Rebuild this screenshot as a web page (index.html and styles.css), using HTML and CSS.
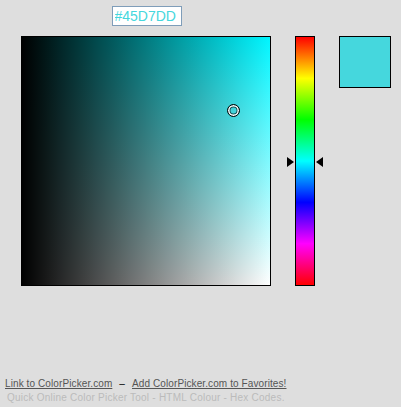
FILE: index.html
```html
<!DOCTYPE html>
<html>
<head>
<meta charset="utf-8">
<link rel="stylesheet" href="styles.css">
</head>
<body>
<div class="app">
  <div class="picker">
    <div class="main-col">
      <input class="hex" type="text" value="#45D7DD">
      <div class="sv">
        <div class="cursor"></div>
      </div>
    </div>
    <div class="hue-col">
      <div class="hue"></div>
      <span class="arrow arrow-left"></span>
      <span class="arrow arrow-right"></span>
    </div>
    <div class="swatch"></div>
  </div>
  <div class="footer">
    <div class="links"><a href="#">Link to ColorPicker.com</a><span class="dash">–</span><a href="#">Add ColorPicker.com to Favorites!</a></div>
    <div class="tagline">Quick Online Color Picker Tool - HTML Colour - Hex Codes.</div>
  </div>
</div>
</body>
</html>
```
FILE: styles.css
```css
html, body {
  margin: 0;
  padding: 0;
  background: #dedede;
}
body {
  width: 401px;
  height: 407px;
  overflow: hidden;
  font-family: "Liberation Sans", Arial, sans-serif;
}
.app {
  padding-top: 6px;
}
.picker {
  display: flex;
  align-items: flex-start;
  padding-left: 21px;
}
.main-col {
  display: flex;
  flex-direction: column;
  align-items: center;
  gap: 10px;
  width: 250px;
}
.hex {
  box-sizing: border-box;
  width: 70px;
  height: 20px;
  margin: 0 0 0 1px;
  padding: 0 0 0 2px;
  border: 1px solid #7f9db9;
  background: #fff;
  color: #45d7dd;
  font-family: "Liberation Sans", Arial, sans-serif;
  font-size: 14px;
  outline: none;
}
.sv {
  position: relative;
  box-sizing: border-box;
  width: 250px;
  height: 250px;
  border: 1px solid #000;
  background:
    linear-gradient(to right, #000, rgba(0,0,0,0)),
    linear-gradient(to bottom, #00f5ff, #fff);
}
.cursor {
  position: absolute;
  left: 205px;
  top: 67px;
  box-sizing: border-box;
  width: 13px;
  height: 13px;
  border: 1.5px solid #000;
  border-radius: 50%;
  box-shadow: inset 0 0 0 1.5px #fff, inset 0 0 0 2.5px rgba(0,0,0,0.6);
}
.hue-col {
  position: relative;
  margin-top: 30px;
  margin-left: 24px;
}
.hue {
  box-sizing: border-box;
  width: 20px;
  height: 250px;
  border: 1px solid #000;
  background: linear-gradient(to bottom, #f00 0%, #ff0 16.67%, #0f0 33.33%, #0ff 50%, #00f 66.67%, #f0f 83.33%, #f00 100%);
}
.arrow {
  position: absolute;
  top: 121px;
  width: 0;
  height: 0;
  border-top: 5px solid transparent;
  border-bottom: 5px solid transparent;
}
.arrow-left {
  left: -8px;
  border-left: 7px solid #000;
}
.arrow-right {
  right: -8px;
  border-right: 7px solid #000;
}
.swatch {
  box-sizing: border-box;
  width: 52px;
  height: 52px;
  margin-top: 30px;
  margin-left: 24px;
  border: 1px solid #000;
  background: #45d7dd;
}
.footer {
  margin-top: 91px;
  padding-left: 5px;
  font-size: 10px;
  line-height: 14px;
}
.links {
  letter-spacing: 0.1px;
}
.links a {
  color: #555;
  text-decoration: underline;
}
.dash {
  display: inline-block;
  margin: 0 7px 0 7px;
  color: #000;
}
.tagline {
  padding-left: 2px;
  color: #bbb;
  letter-spacing: 0.23px;
}
```
